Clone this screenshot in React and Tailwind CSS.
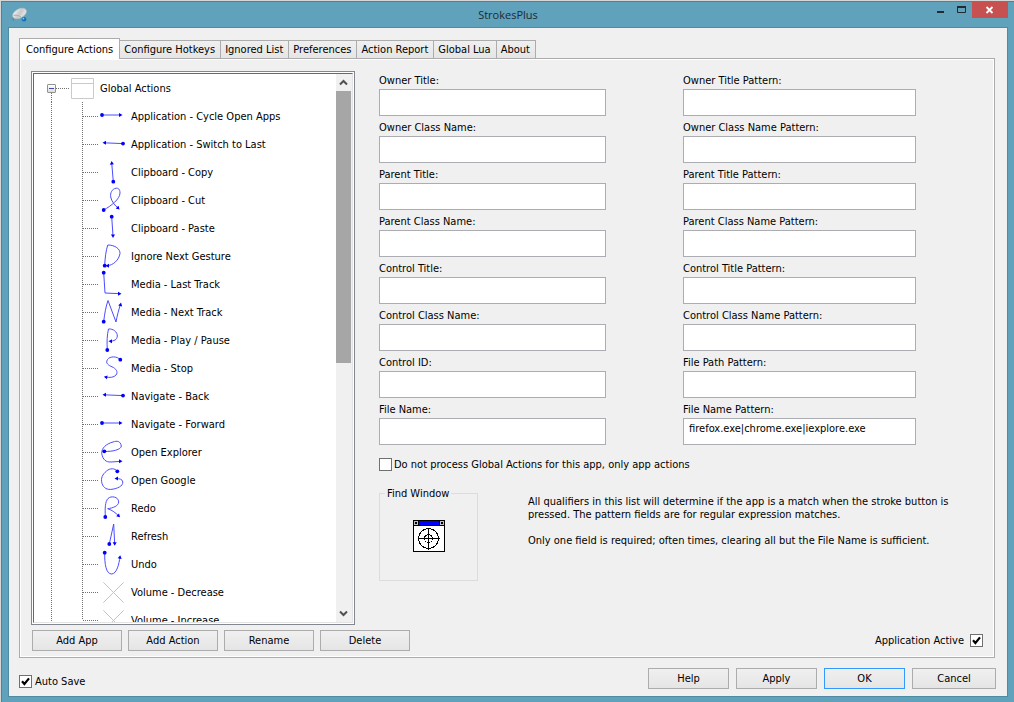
import { useState } from 'react';
import clsx from 'clsx';

const tabs = [
  'Configure Actions',
  'Configure Hotkeys',
  'Ignored List',
  'Preferences',
  'Action Report',
  'Global Lua',
  'About',
];

// stroke path, start dot, arrow tip and arrow angle for each gesture
const right = { d: 'M4 13H23', dot: [4, 13], tip: [23, 13, 0] };
const left = { d: 'M25 13.6L6 12.8', dot: [25, 13.6], tip: [6, 12.8, 180] };

const actions = [
  { name: 'Application - Cycle Open Apps', gesture: right },
  { name: 'Application - Switch to Last', gesture: left },
  {
    name: 'Clipboard - Copy',
    gesture: { d: 'M15.3 23.7L13.7 4.5', dot: [15.3, 23.7], tip: [13.7, 4.5, -95] },
  },
  {
    name: 'Clipboard - Cut',
    gesture: {
      d: 'M5.7 24C13 20 22 13 22 7C22 3 20 2 18 2.2C14 3 12 7 12.7 11C13.4 15 17 20 20.3 22',
      dot: [5.7, 24],
      tip: [20.5, 22.5, 45],
    },
  },
  {
    name: 'Clipboard - Paste',
    gesture: { d: 'M13.7 2.7L15 22', dot: [13.7, 2.7], tip: [15, 22.5, 88] },
  },
  {
    name: 'Ignore Next Gesture',
    gesture: {
      d: 'M6.7 23.7C7 16 8 8 9.8 3C17 3 22.3 7 22 11.5C21 18 15 23.5 9 23.7',
      dot: [6.7, 23.7],
      tip: [9, 23.7, 180],
    },
  },
  {
    name: 'Media - Last Track',
    gesture: { d: 'M5.7 2.7L7 23L22 23.7', dot: [5.7, 2.7], tip: [22, 23.7, 0] },
  },
  {
    name: 'Media - Next Track',
    gesture: {
      d: 'M5.7 23.7C6.5 16 8 8 10 2.5L18 24C19 18 21 11 22.5 6',
      dot: [5.7, 23.7],
      tip: [22.7, 6, -75],
    },
  },
  {
    name: 'Media - Play / Pause',
    gesture: {
      d: 'M9.3 24C8.8 16 9 9 10.5 3C15 2.5 19.5 6 19.3 10C19 14 16 15 12 15.2',
      dot: [9.3, 24],
      tip: [12, 15.2, 180],
    },
  },
  {
    name: 'Media - Stop',
    gesture: {
      d: 'M22.3 5.7C19 2 12 2 9.5 5.5C7 9.5 11 11.5 14 12.8C18 14.5 20.5 18 18 21C16 23.5 12 23.8 7.3 23',
      dot: [22.3, 5.7],
      tip: [7.3, 23, 190],
    },
  },
  { name: 'Navigate - Back', gesture: left },
  { name: 'Navigate - Forward', gesture: right },
  {
    name: 'Open Explorer',
    gesture: {
      d: 'M6.3 13.3C14 14 23.5 11.5 23.3 8C22.5 3 19 2.5 15 4C8 6 3.5 10 3.7 15.5C5 22 8 24.2 13 24L23 23.3',
      dot: [6.3, 13.3],
      tip: [23, 23.3, 0],
    },
  },
  {
    name: 'Open Google',
    gesture: {
      d: 'M19.3 5.3C17 2 12 2 8.5 5C4.5 8.5 2.5 12 4 17.5C5.5 22 9 24 14 23.3C19 22.5 25 20.5 24.8 16C24.5 13 21 12.5 18 12.5',
      dot: [19.3, 5.3],
      tip: [18, 12.5, 180],
    },
  },
  {
    name: 'Redo',
    gesture: {
      d: 'M7.3 23C7 14 7 8 10 4.5C13 1.5 20.5 2.5 20.7 8C20.5 12 15 14 9.7 14.7C14 16 18 19 21 22.3',
      dot: [7.3, 23],
      tip: [21, 22.3, 45],
    },
  },
  {
    name: 'Refresh',
    gesture: { d: 'M11.3 22L15.7 2L16.7 22.3', dot: [11.3, 22], tip: [16.7, 22.3, 88] },
  },
  {
    name: 'Undo',
    gesture: {
      d: 'M6.7 2.7C6.5 14 8 24 13.7 24C19 23.5 21 14 22 6.7',
      dot: [6.7, 2.7],
      tip: [22, 6.7, -80],
    },
  },
  { name: 'Volume - Decrease', gesture: null },
  { name: 'Volume - Increase', gesture: null },
];

const fields = [
  'Owner Title',
  'Owner Title Pattern',
  'Owner Class Name',
  'Owner Class Name Pattern',
  'Parent Title',
  'Parent Title Pattern',
  'Parent Class Name',
  'Parent Class Name Pattern',
  'Control Title',
  'Control Title Pattern',
  'Control Class Name',
  'Control Class Name Pattern',
  'Control ID',
  'File Path Pattern',
  'File Name',
  'File Name Pattern',
];

const initialValues = {
  'File Name Pattern': 'firefox.exe|chrome.exe|iexplore.exe',
};

function Gesture({ gesture }) {
  if (!gesture) {
    return (
      <svg width="28" height="28" viewBox="0 0 28 28" className="shrink-0">
        <path d="M5.3 4.3L25.7 24.7M25.7 4.3L5.3 24.7" stroke="#c4c4c4" />
      </svg>
    );
  }
  const [cx, cy] = gesture.dot;
  const [x, y, angle] = gesture.tip;
  return (
    <svg width="28" height="28" viewBox="0 0 28 28" fill="none" className="shrink-0">
      <path d={gesture.d} stroke="#4c4cff" />
      <circle cx={cx} cy={cy} r="1.9" fill="#0000ff" />
      <path
        d="M1.5 0L-2 -2V2Z"
        fill="#0000ff"
        transform={`translate(${x} ${y}) rotate(${angle})`}
      />
    </svg>
  );
}

function VLine({ className }) {
  return (
    <span
      className={clsx(
        'w-px shrink-0 bg-[repeating-linear-gradient(to_bottom,#707070_0_1px,transparent_1px_2px)]',
        className,
      )}
    />
  );
}

function HLine({ className }) {
  return (
    <span
      className={clsx(
        'h-px shrink-0 bg-[repeating-linear-gradient(to_right,#707070_0_1px,transparent_1px_2px)]',
        className,
      )}
    />
  );
}

function PushButton({ children, primary, className }) {
  return (
    <button
      type="button"
      className={clsx(
        'h-[21px] border bg-linear-to-b from-[#f0f0f0] to-[#e5e5e5] text-center',
        primary ? 'border-[#3399ff]' : 'border-[#acacac]',
        className,
      )}
    >
      {children}
    </button>
  );
}

function CheckBox({ id, defaultChecked = false }) {
  const [checked, setChecked] = useState(defaultChecked);
  return (
    <span className="relative flex size-[13px] shrink-0">
      <input
        id={id}
        type="checkbox"
        checked={checked}
        onChange={(e) => setChecked(e.target.checked)}
        className="size-[13px] appearance-none border border-[#707070] bg-white"
      />
      {checked && (
        <svg
          width="13"
          height="13"
          viewBox="0 0 13 13"
          fill="none"
          className="pointer-events-none absolute inset-0"
        >
          <path d="M3 6.2L5.4 9L10 3.4" stroke="#000" strokeWidth="2.2" />
        </svg>
      )}
    </span>
  );
}

function Field({ label }) {
  const [value, setValue] = useState(initialValues[label] || '');
  const id = label.toLowerCase().replaceAll(' ', '-');
  return (
    <div className="flex min-w-0 flex-col">
      <label htmlFor={id} className="h-[18px] leading-[20px]">
        {label}:
      </label>
      <input
        id={id}
        type="text"
        value={value}
        onChange={(e) => setValue(e.target.value)}
        className="h-[27px] w-full border border-[#abadb3] bg-white px-[5px] pb-[6px] outline-none"
      />
    </div>
  );
}

function TitleBar() {
  return (
    <header className="flex h-[25px] shrink-0 items-start">
      <div className="flex flex-1">
        <svg width="20" height="18" viewBox="0 0 20 18" className="mt-1 ml-2">
          <defs>
            <linearGradient id="mouse" x1="0" y1="0" x2="1" y2="1">
              <stop offset="0" stopColor="#ffffff" />
              <stop offset="0.5" stopColor="#c9c9c9" />
              <stop offset="1" stopColor="#f4f4f4" />
            </linearGradient>
          </defs>
          <path d="M3 11L3.5 15" stroke="#6d7f88" />
          <ellipse
            cx="9.5"
            cy="7.5"
            rx="7.5"
            ry="4.4"
            fill="url(#mouse)"
            stroke="#b9c4c8"
            strokeWidth="0.6"
            transform="rotate(-28 9.5 7.5)"
          />
          <path d="M3.5 9.5C7 8.5 11 10.5 11.5 12" stroke="#9a9a9a" strokeWidth="0.7" fill="none" />
          <circle cx="14" cy="13.3" r="2.3" fill="#1272b4" />
          <circle cx="13.4" cy="12.6" r="0.9" fill="#7fd0f5" />
        </svg>
      </div>
      <h1 className="pt-[5px] font-['Open_Sans','Noto_Sans',sans-serif] text-[11px] leading-[16px] text-[#1d2a30]">
        StrokesPlus
      </h1>
      <div className="flex flex-1 justify-end">
        <button type="button" aria-label="Minimize" className="h-4 w-5">
          <svg width="20" height="16" viewBox="0 0 20 16">
            <path d="M5 10H12" stroke="#222b30" strokeWidth="2" />
          </svg>
        </button>
        <button type="button" aria-label="Maximize" className="h-4 w-5">
          <svg width="20" height="16" viewBox="0 0 20 16" fill="none">
            <path d="M5.5 4.5H13.5V10.5H5.5Z" stroke="#222b30" />
            <path d="M5 5H14" stroke="#222b30" strokeWidth="2" />
          </svg>
        </button>
        <button type="button" aria-label="Close" className="mr-[6px] h-4 w-9 bg-[#c75050]">
          <svg width="36" height="16" viewBox="0 0 36 16">
            <path d="M14.5 5L20.5 11M20.5 5L14.5 11" stroke="#fff" strokeWidth="1.8" />
          </svg>
        </button>
      </div>
    </header>
  );
}

function ActionTree() {
  return (
    <div className="flex w-[324px] shrink-0 border border-[#828790] bg-white p-px">
      <div className="flex min-w-0 flex-1 border-t border-r border-b border-l border-t-[#696969] border-r-[#e3e3e3] border-b-[#e3e3e3] border-l-[#696969]">
        <ul className="min-w-0 flex-1 overflow-hidden">
          <li>
            <div className="flex h-7 items-center">
              <div className="flex h-full w-[22px] flex-col items-end">
                <button
                  type="button"
                  aria-label="Collapse Global Actions"
                  className="mt-[10px] flex size-[9px] shrink-0 items-center justify-center rounded-[1px] border border-[#919191] bg-linear-to-b from-white to-[#dcdcdc]"
                >
                  <span className="h-px w-[5px] bg-[#3c50a0]" />
                </button>
                <VLine className="mr-1 flex-1" />
              </div>
              <HLine className="w-[13px]" />
              <svg width="23" height="21" viewBox="0 0 23 21" fill="none" className="ml-[2px]">
                <path d="M0.5 0.5H22.5V20.5H0.5ZM0.5 5.5H22.5" stroke="#cacaca" />
              </svg>
              <span className="ml-[6px]">Global Actions</span>
            </div>
            <ul>
              {actions.map((action) => (
                <li key={action.name} className="group flex h-7 items-center">
                  <VLine className="ml-[17px] h-full" />
                  <VLine className="ml-[30px] h-full group-last:h-1/2 group-last:self-start" />
                  <HLine className="w-[15px]" />
                  <Gesture gesture={action.gesture} />
                  <span className="ml-[5px] whitespace-nowrap">{action.name}</span>
                </li>
              ))}
            </ul>
          </li>
        </ul>
        {/* Scroll bar */}
        <div className="flex w-4 shrink-0 flex-col bg-[#f0f0f0] pr-px">
          <button type="button" aria-label="Scroll up" className="flex h-[17px] items-center justify-center">
            <svg width="9" height="7" viewBox="0 0 9 7" fill="none">
              <path d="M1 5.5L4.5 2L8 5.5" stroke="#505050" strokeWidth="2" />
            </svg>
          </button>
          <div className="flex-1">
            <div className="h-[53%] bg-[#a6a6a6]" />
          </div>
          <button type="button" aria-label="Scroll down" className="flex h-[17px] items-center justify-center">
            <svg width="9" height="7" viewBox="0 0 9 7" fill="none">
              <path d="M1 1.5L4.5 5L8 1.5" stroke="#505050" strokeWidth="2" />
            </svg>
          </button>
        </div>
      </div>
    </div>
  );
}

function FindWindow() {
  return (
    <fieldset className="h-[94px] w-[99px] shrink-0 border border-[#dcdcdc] pt-[20px]">
      <legend className="ml-[5px] px-[2px] leading-[13px] whitespace-nowrap">Find Window</legend>
      <svg
        width="32"
        height="32"
        viewBox="0 0 32 32"
        fill="none"
        shapeRendering="crispEdges"
        className="mx-auto"
      >
        <path d="M0.5 0.5H31.5V31.5H0.5Z" fill="#fff" stroke="#000" />
        <path d="M1 1H31V5H1Z" fill="#0000ff" />
        <path d="M0 5.5H32" stroke="#000" />
        <path d="M1 1H5V5H1ZM27 1H31V5H27Z" fill="#c0c0c0" />
        <path d="M5.5 0V5M26.5 0V5" stroke="#000" />
        <path d="M2 2H4V4H2ZM28 2H30V4H28Z" fill="#000" />
        <circle cx="15.5" cy="18.5" r="10" stroke="#000" />
        <circle cx="15.5" cy="18.5" r="4" stroke="#000" />
        <path d="M5 18.5H27M15.5 8V30" stroke="#000" />
      </svg>
    </fieldset>
  );
}

function AppQualifiers() {
  return (
    <div className="min-w-0 flex-1">
      <form className="grid grid-cols-[227fr_233fr] gap-x-[77px] gap-y-[2px] pr-[67px]">
        {fields.map((label) => (
          <Field key={label} label={label} />
        ))}
      </form>

      <div className="mt-[13px] flex items-center">
        <CheckBox id="skip-global" />
        <label htmlFor="skip-global" className="ml-[2px]">
          Do not process Global Actions for this app, only app actions
        </label>
      </div>

      <div className="mt-4 flex">
        <FindWindow />
        <div className="mt-2 ml-[50px] max-w-[430px]">
          <p>
            All qualifiers in this list will determine if the app is a match when the stroke button
            is pressed. The pattern fields are for regular expression matches.
          </p>
          <p className="mt-[13px]">
            Only one field is required; often times, clearing all but the File Name is sufficient.
          </p>
        </div>
      </div>
    </div>
  );
}

export default function App() {
  const [activeTab, setActiveTab] = useState('Configure Actions');

  return (
    <div className="h-screen min-h-[640px] bg-[#d6d6d6] pt-px pl-px font-['DejaVu_Sans_Condensed','Noto_Sans',sans-serif] text-[11px] leading-[13px] text-black">
      <div className="flex h-full flex-col border-t border-l border-[#4a8499] bg-[#60a1bb]">
        <TitleBar />
        <main className="mr-[6px] mb-[5px] ml-[6px] flex min-h-0 flex-1 flex-col border border-[#4f8ba2] bg-[#f0f0f0] pt-[10px] pr-[11px] pb-[7px] pl-[10px]">
          {/* Tabs */}
          <nav className="relative z-10 -mb-px flex h-[21px] shrink-0 items-end" role="tablist">
            {tabs.map((tab) => (
              <button
                key={tab}
                type="button"
                role="tab"
                aria-selected={tab === activeTab}
                onClick={() => setActiveTab(tab)}
                className={clsx(
                  'border-[#acacac] whitespace-nowrap',
                  tab === activeTab
                    ? 'h-[21px] border-t border-r border-l bg-white px-[6px]'
                    : 'h-[19px] border-t border-r border-b bg-linear-to-b from-[#f0f0f0] to-[#e5e5e5] pr-[5px] pl-1',
                )}
              >
                {tab}
              </button>
            ))}
          </nav>

          <section className="mr-px flex min-h-0 flex-1 flex-col border border-[#acacac] pt-3 pr-[11px] pb-[6px] pl-[11px] shadow-[inset_0_0_0_1px_#fff]">
            <div className="flex min-h-0 flex-1 gap-6">
              <ActionTree />
              <AppQualifiers />
            </div>
            <div className="mt-[5px] flex items-center gap-[6px] pl-px">
              <PushButton className="w-[90px]">Add App</PushButton>
              <PushButton className="w-[90px]">Add Action</PushButton>
              <PushButton className="w-[90px]">Rename</PushButton>
              <PushButton className="w-[90px]">Delete</PushButton>
              <label htmlFor="app-active" className="ml-auto">
                Application Active
              </label>
              <CheckBox id="app-active" defaultChecked />
            </div>
          </section>

          <footer className="mt-[10px] flex shrink-0 items-end">
            <div className="mb-px flex items-center">
              <CheckBox id="auto-save" defaultChecked />
              <label htmlFor="auto-save" className="ml-[3px]">
                Auto Save
              </label>
            </div>
            <div className="ml-auto flex gap-[7px]">
              <PushButton className="w-[81px]">Help</PushButton>
              <PushButton className="w-[81px]">Apply</PushButton>
              <PushButton className="w-[81px]" primary>
                OK
              </PushButton>
              <PushButton className="w-[84px]">Cancel</PushButton>
            </div>
          </footer>
        </main>
      </div>
    </div>
  );
}
